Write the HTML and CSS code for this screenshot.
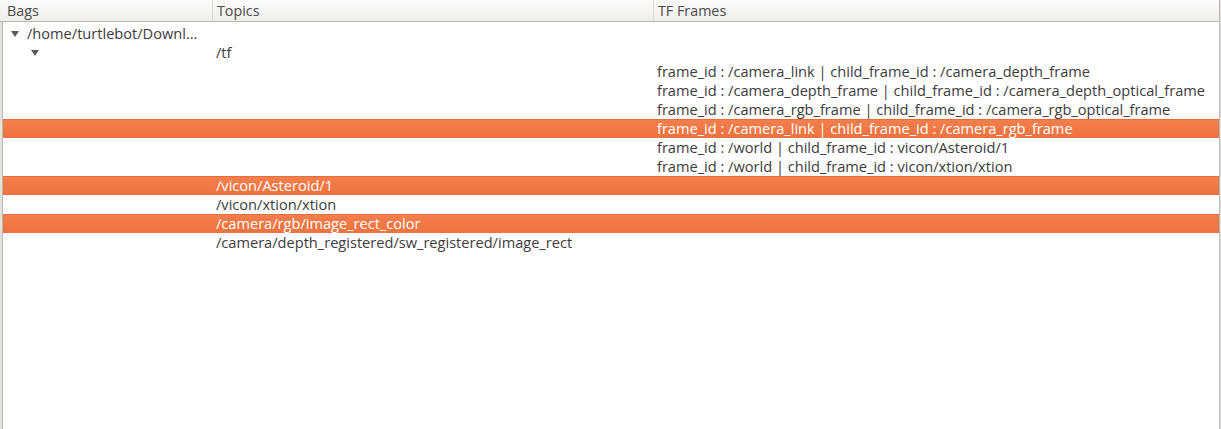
FILE: index.html
```html
<!DOCTYPE html>
<html>
<head>
<meta charset="utf-8">
<link rel="stylesheet" href="styles.css">
</head>
<body>
<div class="frame">
  <div class="view">
    <div class="header">
      <div class="hcell">Bags</div>
      <div class="hcell">Topics</div>
      <div class="hcell last">TF Frames</div>
    </div>
    <div class="rows">
      <div class="row">
        <div class="cell bag"><span class="tri"></span>/home/turtlebot/Downl…</div>
        <div class="cell"></div>
        <div class="cell"></div>
      </div>
      <div class="row">
        <div class="cell bag2"><span class="tri"></span></div>
        <div class="cell topic">/tf</div>
        <div class="cell"></div>
      </div>
      <div class="row">
        <div class="cell"></div><div class="cell"></div>
        <div class="cell tf">frame_id : /camera_link | child_frame_id : /camera_depth_frame</div>
      </div>
      <div class="row">
        <div class="cell"></div><div class="cell"></div>
        <div class="cell tf">frame_id : /camera_depth_frame | child_frame_id : /camera_depth_optical_frame</div>
      </div>
      <div class="row">
        <div class="cell"></div><div class="cell"></div>
        <div class="cell tf">frame_id : /camera_rgb_frame | child_frame_id : /camera_rgb_optical_frame</div>
      </div>
      <div class="row sel">
        <div class="cell"></div><div class="cell"></div>
        <div class="cell tf">frame_id : /camera_link | child_frame_id : /camera_rgb_frame</div>
      </div>
      <div class="row">
        <div class="cell"></div><div class="cell"></div>
        <div class="cell tf">frame_id : /world | child_frame_id : vicon/Asteroid/1</div>
      </div>
      <div class="row">
        <div class="cell"></div><div class="cell"></div>
        <div class="cell tf">frame_id : /world | child_frame_id : vicon/xtion/xtion</div>
      </div>
      <div class="row sel">
        <div class="cell"></div>
        <div class="cell topic">/vicon/Asteroid/1</div>
        <div class="cell"></div>
      </div>
      <div class="row">
        <div class="cell"></div>
        <div class="cell topic">/vicon/xtion/xtion</div>
        <div class="cell"></div>
      </div>
      <div class="row sel">
        <div class="cell"></div>
        <div class="cell topic">/camera/rgb/image_rect_color</div>
        <div class="cell"></div>
      </div>
      <div class="row">
        <div class="cell"></div>
        <div class="cell topic">/camera/depth_registered/sw_registered/image_rect</div>
        <div class="cell"></div>
      </div>
    </div>
  </div>
</div>
</body>
</html>
```

FILE: styles.css
```css
html, body {
  margin: 0;
  padding: 0;
  background: #ffffff;
}
body {
  font-family: "Open Sans", "DejaVu Sans", sans-serif;
  font-size: 14.6px;
  color: #3c3c3c;
}
.frame {
  height: 429px;
  box-sizing: border-box;
  border-left: 2px solid #e4e2df;
  border-right: 1px solid #e4e2df;
}
.view {
  height: 100%;
  box-sizing: border-box;
  border-left: 1px solid #bcb9b4;
  border-right: 1px solid #bcb9b4;
  background: #ffffff;
}
.header {
  display: grid;
  grid-template-columns: 210px 441px 1fr;
  height: 22px;
  box-sizing: border-box;
  border-bottom: 1px solid #b9b6b1;
  background: linear-gradient(#fbfbfb, #efeeec);
  color: #4b4b4b;
  font-size: 14.3px;
  margin-left: -3px;
  padding-left: 3px;
}
.hcell {
  box-sizing: border-box;
  border-right: 1px solid #d9d7d3;
  padding-left: 4px;
  line-height: 21px;
}
.hcell.last {
  border-right: none;
}
.rows {
  padding-top: 2px;
}
.row {
  display: grid;
  grid-template-columns: 210px 441px 1fr;
  height: 19px;
  line-height: 19px;
  white-space: nowrap;
}
.row.sel {
  background: linear-gradient(#f3804d, #ee7240);
  box-shadow: inset 0 1px 0 #e96c3a;
  color: #ffffff;
}
.cell {
  overflow: hidden;
  box-sizing: border-box;
}
.topic {
  padding-left: 3px;
}
.tf {
  padding-left: 3px;
}
.bag {
  padding-left: 8px;
}
.bag2 {
  padding-left: 28px;
}
.tri {
  display: inline-block;
  width: 0;
  height: 0;
  border-left: 4px solid transparent;
  border-right: 4px solid transparent;
  border-top: 6px solid #5a5a5a;
  margin-right: 8px;
  vertical-align: 2px;
}
```
